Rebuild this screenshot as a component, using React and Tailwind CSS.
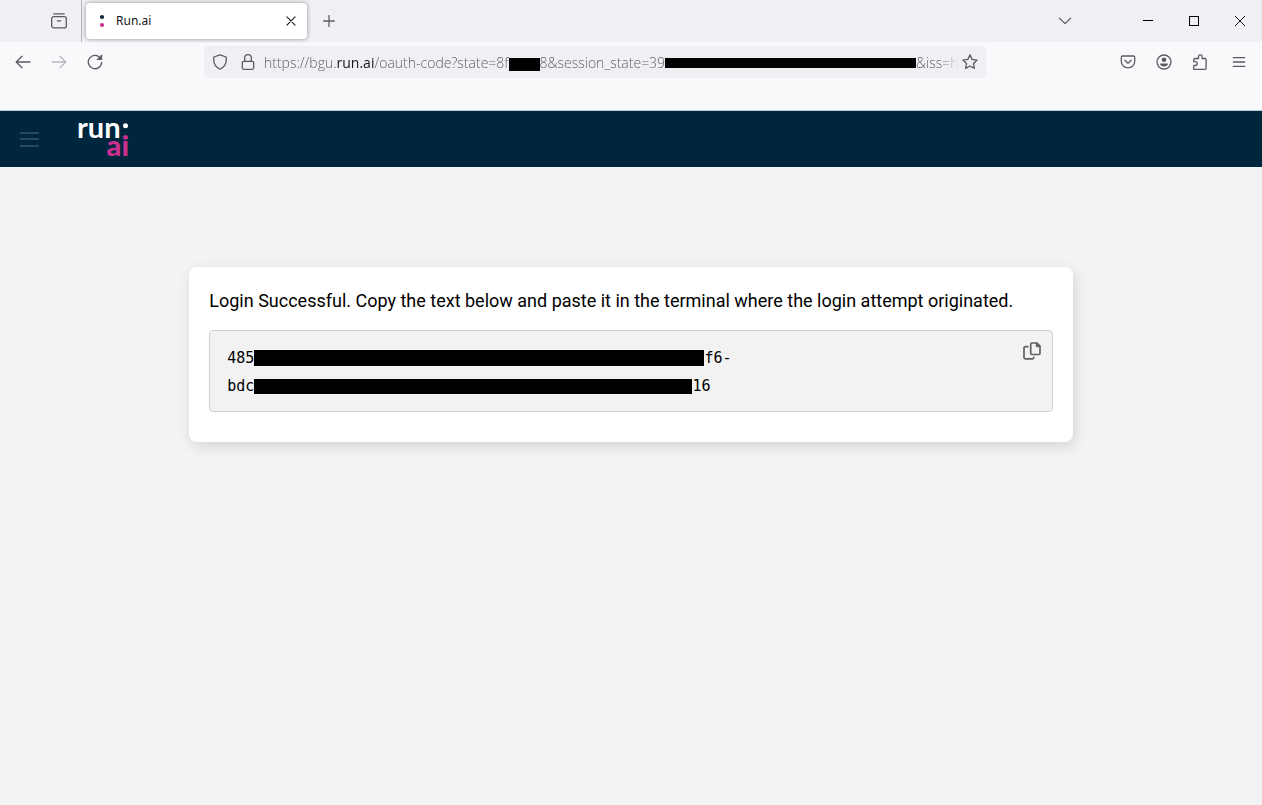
import React from "react";

const stroke = {
  fill: "none",
  stroke: "currentColor",
  strokeWidth: 1.3,
  strokeLinecap: "round",
  strokeLinejoin: "round",
};

function Icon({ size = 16, className = "", children, ...rest }) {
  return (
    <svg width={size} height={size} viewBox="0 0 16 16" className={className} aria-hidden="true" {...stroke} {...rest}>
      {children}
    </svg>
  );
}

function IconButton({ label, className = "", children, ...rest }) {
  return (
    <button type="button" aria-label={label} className={`flex h-8 shrink-0 items-center justify-center ${className}`} {...rest}>
      {children}
    </button>
  );
}

function TabStrip() {
  return (
    <div className="flex h-[42px] items-center bg-[#f0f0f4] pb-px text-[#5b5b66]">
      <div className="flex h-[42px] w-[82px] shrink-0 items-center justify-end border-r border-[#b4b4bc] pr-1.5">
        <IconButton label="Firefox View" className="w-8">
          <Icon size={16}>
            <path d="M2.8 0.8h10.4" />
            <rect x="0.7" y="3.7" width="14.600" height="11.200" rx="2" />
            <path d="M6.300 7.8h3.400" />
          </Icon>
        </IconButton>
      </div>
      <div className="ml-1 flex h-9 w-[221px] shrink-0 items-center rounded bg-white pr-2 pl-3 text-[#15141a] shadow-[0_0_4px_rgba(0,0,0,0.4)]">
        <svg width="8" height="16" viewBox="0 0 8 16" aria-hidden="true">
          <circle cx="4" cy="4" r="2.1" fill="#0b2b3c" />
          <circle cx="4" cy="12" r="2.1" fill="#c9308e" />
        </svg>
        <span className="ml-2.5 flex-1 font-['Noto_Sans',sans-serif] text-[12px]">Run.ai</span>
        <button type="button" aria-label="Close tab" className="flex h-4 w-4 items-center justify-center">
          <Icon size={10} strokeWidth={1.7}>
            <path d="M1.5 1.5l13 13M14.5 1.5l-13 13" />
          </Icon>
        </button>
      </div>
      <IconButton label="New tab" className="ml-1.5 w-8">
        <Icon size={12} strokeWidth={1.7}>
          <path d="M8 0.8v14.4M0.8 8h14.4" />
        </Icon>
      </IconButton>
      <div className="flex-1" />
      <IconButton label="List all tabs" className="mr-11 w-8">
        <Icon size={14} strokeWidth={1.5}>
          <path d="M1.5 4.7L8 11l6.500-6.300" />
        </Icon>
      </IconButton>
      <IconButton label="Minimize" className="w-[46px] text-black">
        <svg width="10" height="10" viewBox="0 0 10 10" aria-hidden="true">
          <path d="M0 4.5h10" stroke="currentColor" />
        </svg>
      </IconButton>
      <IconButton label="Maximize" className="w-[46px] text-black">
        <svg width="10" height="10" viewBox="0 0 10 10" aria-hidden="true">
          <rect x="0.5" y="0.5" width="9" height="9" fill="none" stroke="currentColor" />
        </svg>
      </IconButton>
      <IconButton label="Close window" className="w-[45px] text-black">
        <svg width="10" height="10" viewBox="0 0 10 10" aria-hidden="true">
          <path d="M0 0l10 10M10 0L0 10" stroke="currentColor" strokeWidth="0.9" />
        </svg>
      </IconButton>
    </div>
  );
}

function AddressBar() {
  return (
    <div className="flex h-8 w-[62%] items-center rounded bg-[#f0f0f4] pr-2 pl-2">
      <Icon size={16} className="shrink-0">
        <path d="M8 0.800L14.200 3v3.800c0 3.700-2.900 6.700-6.200 8.500C4.700 13.500 1.800 10.500 1.800 6.800V3z" />
      </Icon>
      <Icon size={16} className="ml-3 shrink-0">
        <rect x="2.300" y="7.300" width="11.400" height="8" rx="1.500" />
        <path d="M4.700 7.300V4a3.300 3.300 0 0 1 6.600 0v3.300" />
      </Icon>
      <div className="relative ml-2 flex h-8 min-w-0 flex-1 items-center overflow-hidden font-['Open_Sans',sans-serif] text-[14px] font-light whitespace-nowrap text-[#62626c] [mask-image:linear-gradient(to_left,transparent_4px,black_20px)]">
        <span>https://bgu.</span>
        <span className="font-normal text-[#15141a]">run.ai</span>
        <span>/oauth-code?state=8f</span>
        <span className="mt-1 h-[13px] w-[31px] shrink-0 bg-black" />
        <span>8&amp;session_state=39</span>
        <span className="mt-0.5 h-2.5 w-[251px] shrink-0 bg-black" />
        <span>&amp;iss=h</span>
        <input type="text" aria-label="Address" className="absolute inset-0 w-full bg-transparent outline-none" />
      </div>
      <button type="button" aria-label="Bookmark this page" className="shrink-0">
        <Icon size={16}>
          <path d="M8 0.900l2.150 4.500 4.950.650-3.600 3.450.900 4.900L8 12l-4.400 2.400.900-4.900L.900 6.050l4.950-.650z" />
        </Icon>
      </button>
    </div>
  );
}

function NavBar() {
  return (
    <div className="flex h-10 items-center text-[#5b5b66]">
      <div className="flex flex-[8] items-center pl-[5px]">
        <IconButton label="Back" className="w-9">
          <Icon size={16}>
            <path d="M15 8H1.200M7 2.200L1.200 8 7 13.800" />
          </Icon>
        </IconButton>
        <IconButton label="Forward" className="w-9 disabled:text-[#b9b9c0]" disabled>
          <Icon size={16}>
            <path d="M1 8h13.800M9 2.200L14.800 8 9 13.800" />
          </Icon>
        </IconButton>
        <IconButton label="Reload" className="w-9">
          <Icon size={16}>
            <path d="M13.600 4.300A6.700 6.700 0 1 0 14.700 8.300" />
            <path d="M14.700 1.200v4.300h-4.300z" fill="currentColor" strokeWidth="1" />
          </Icon>
        </IconButton>
      </div>
      <AddressBar />
      <div className="flex flex-[11] items-center justify-end pr-0.5">
        <IconButton label="Save to Pocket" className="w-9">
          <Icon size={16}>
            <path d="M2.500 2h11a1.200 1.200 0 0 1 1.200 1.200v4.300a6.700 6.300 0 0 1-13.400 0V3.200A1.200 1.200 0 0 1 2.500 2z" />
            <path d="M4.800 6.300L8 9.300l3.200-3" />
          </Icon>
        </IconButton>
        <IconButton label="Account" className="w-9">
          <Icon size={16}>
            <circle cx="8" cy="8" r="7" />
            <circle cx="8" cy="5.700" r="2.300" fill="currentColor" stroke="none" />
            <path d="M4 9.500h8c0 2-1.700 3-4 3s-4-1-4-3z" fill="currentColor" stroke="none" />
          </Icon>
        </IconButton>
        <IconButton label="Extensions" className="w-9">
          <Icon size={16}>
            <path d="M1.800 15.300v-3.800h1.500a1.900 1.900 0 0 0 0-3.800H1.800V5.500a1 1 0 0 1 1-1h3.700V2.600a1.800 1.800 0 0 1 3.600 0v1.900h3a1 1 0 0 1 1 1v8.800a1 1 0 0 1-1 1z" />
          </Icon>
        </IconButton>
        <IconButton label="Open application menu" className="w-[42px]">
          <Icon size={14} strokeWidth={1.500}>
            <path d="M1.500 3h13M1.500 8h13M1.500 13h13" />
          </Icon>
        </IconButton>
      </div>
    </div>
  );
}

function Logo() {
  return (
    <div className="relative h-[42px] w-14 font-['Lato',sans-serif] text-[29px] leading-[18px] font-bold">
      <span className="block pl-px text-white">run</span>
      <span className="block pr-[3px] text-right font-black text-[#c9308e]">ai</span>
      <svg className="absolute top-0 left-0" width="56" height="42" viewBox="0 0 56 42" aria-hidden="true">
        <circle cx="49.500" cy="7.800" r="2.500" fill="#fff" />
      </svg>
    </div>
  );
}

function AppHeader() {
  return (
    <header className="flex h-14 items-center bg-[#00263e] pl-5">
      <button type="button" aria-label="Menu" className="text-[#244a60]">
        <svg width="19" height="16" viewBox="0 0 19 16" aria-hidden="true">
          <path d="M0 2h19M0 8h19M0 15h19" stroke="currentColor" strokeWidth="2" />
        </svg>
      </button>
      <div className="ml-[37px]">
        <Logo />
      </div>
    </header>
  );
}

function LoginCard() {
  return (
    <main className="mx-auto mt-[100px] w-[70%] rounded-lg bg-white px-5 pt-5 pb-[30px] shadow-[2px_4px_14px_rgba(0,0,0,0.13)]">
      <p className="font-[Roboto,sans-serif] text-[18px] leading-7 text-black">
        Login Successful. Copy the text below and paste it in the terminal where the login attempt originated.
      </p>
      <div className="mt-[15px] flex items-start justify-between rounded border border-[#cfcfcf] bg-[#f2f2f2] pr-[11px] pl-[17px]">
        <code className="block pt-[13px] pb-[11px] font-['DejaVu_Sans_Mono',monospace] text-[15px] leading-7 text-black">
          <span className="flex items-center">
            485
            <span className="h-4 w-[450px] bg-black" />
            f6-
          </span>
          <span className="flex items-center">
            bdc
            <span className="h-[15px] w-[438px] bg-black" />
            16
          </span>
        </code>
        <button type="button" aria-label="Copy" className="mt-[11px] text-[#616161]">
          <svg width="18" height="18" viewBox="0 0 18 18" fill="none" stroke="currentColor" strokeWidth="1.700" strokeLinejoin="round" aria-hidden="true">
            <path d="M9 1h5l3 3v7.200a1.300 1.300 0 0 1-1.300 1.300H9a1.300 1.300 0 0 1-1.300-1.300V2.300A1.300 1.300 0 0 1 9 1z" />
            <path d="M13.300 1v3.700H17z" fill="currentColor" strokeWidth="1" />
            <path d="M5.500 4.700H2.300A1.300 1.300 0 0 0 1 6v9.500a1.300 1.300 0 0 0 1.300 1.300h7.200a1.300 1.300 0 0 0 1.300-1.300v-.700" />
          </svg>
        </button>
      </div>
    </main>
  );
}

export default function App() {
  return (
    <div className="flex min-h-screen flex-col bg-[#f1f3f5]">
      <div className="h-[111px] border-b border-[#b9cbd6] bg-[#f9f9fb]">
        <TabStrip />
        <NavBar />
      </div>
      <AppHeader />
      <LoginCard />
    </div>
  );
}
